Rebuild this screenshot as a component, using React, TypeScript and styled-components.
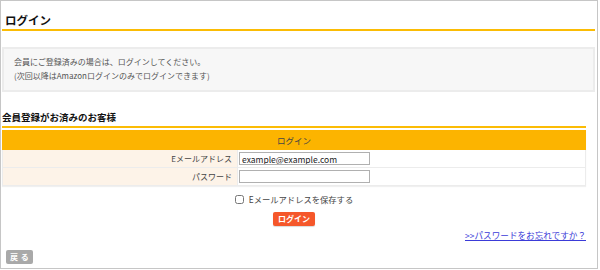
import React from 'react'
import styled, { createGlobalStyle } from 'styled-components'

const GlobalStyle = createGlobalStyle`
  body {
    margin: 0;
    background: #fff;
    font-family: "Noto Sans CJK JP", "Liberation Sans", sans-serif;
    color: #444;
  }
`

const Frame = styled.div`
  width: 598px;
  height: 269px;
  box-sizing: border-box;
  border: 1px solid #c6c6c6;
  padding: 0 2px 0 1px;
  display: flex;
  flex-direction: column;
`

const PageTitle = styled.h1`
  margin: 0;
  padding: 10px 0 0 3px;
  font-size: 11.5px;
  line-height: 18px;
  font-weight: bold;
  color: #111;
  border-bottom: 2px solid #fbbc05;
`

const InfoBox = styled.div`
  margin-top: 16px;
  border: 2px solid #ececec;
  background: #f7f7f7;
  padding: 6px 10px 7px;
  font-size: 8px;
  line-height: 14px;
  color: #555;
`

const Section = styled.div`
  margin-right: 9px;
  margin-top: 18px;
  display: flex;
  flex-direction: column;
`

const SectionTitle = styled.h2`
  margin: 0;
  font-size: 9.5px;
  font-weight: bold;
  line-height: 14px;
  padding-bottom: 2px;
  color: #111;
  border-bottom: 2px solid #fbbc05;
`

const LoginTable = styled.table`
  margin-top: 2px;
  width: 100%;
  border-collapse: collapse;
  font-size: 8px;
  box-shadow: 0 1px 1px rgba(0, 0, 0, 0.06);
`

const HeadCell = styled.th`
  background: #fcb400;
  height: 18px;
  padding: 0;
  font-weight: normal;
  font-size: 8.5px;
  color: #444;
  border: 1px solid #fcb400;
`

const LabelCell = styled.td`
  width: 229px;
  background: #fdf3e8;
  text-align: right;
  padding: 0 5px 0 0;
  height: 17px;
  color: #444;
  border: 1px solid #ececec;
`

const FieldCell = styled.td`
  padding: 0 0 0 1px;
  border: 1px solid #ececec;
  background: #fff;
`

const TextInput = styled.input`
  display: block;
  box-sizing: border-box;
  width: 131px;
  height: 13px;
  border: 1px solid #b0b0b0;
  padding: 0 2px;
  font-family: "Noto Sans CJK JP", sans-serif;
  font-size: 8.5px;
  color: #222;
  outline: none;
`

const SaveRow = styled.label`
  margin-top: 7px;
  display: flex;
  align-items: center;
  justify-content: center;
  gap: 5px;
  font-size: 8.3px;
  line-height: 12px;
  color: #444;
`

const Check = styled.input`
  width: 9px;
  height: 9px;
  margin: 0;
`

const SubmitRow = styled.div`
  margin-top: 7px;
  display: flex;
  justify-content: center;
`

const SubmitButton = styled.button`
  background: #f5572a;
  color: #fff;
  border: none;
  border-radius: 2px;
  height: 14px;
  padding: 0 5px;
  font-family: "Noto Sans CJK JP", sans-serif;
  font-size: 8px;
  font-weight: bold;
  line-height: 14px;
  box-shadow: 0 1px 1px rgba(0, 0, 0, 0.15);
`

const ForgotRow = styled.div`
  margin-top: 3px;
  text-align: right;
  font-size: 8.6px;
  line-height: 12px;
`

const ForgotLink = styled.a`
  color: #3b3bd8;
  text-decoration: underline;
`

const BackButton = styled.button`
  margin: auto 0 4px 4px;
  align-self: flex-start;
  background: #a9a9a9;
  color: #fff;
  border: none;
  border-radius: 2px;
  height: 14px;
  padding: 0 4px;
  font-family: "Noto Sans CJK JP", sans-serif;
  font-size: 8px;
  font-weight: bold;
  line-height: 14px;
  letter-spacing: 0.5px;
`

const App = () => {
  return (
    <Frame>
      <GlobalStyle />
      <PageTitle>ログイン</PageTitle>
      <InfoBox>
        会員にご登録済みの場合は、ログインしてください。
        <br />
        (次回以降はAmazonログインのみでログインできます)
      </InfoBox>
      <Section>
        <SectionTitle>会員登録がお済みのお客様</SectionTitle>
        <LoginTable>
          <thead>
            <tr>
              <HeadCell colSpan={2}>ログイン</HeadCell>
            </tr>
          </thead>
          <tbody>
            <tr>
              <LabelCell>Eメールアドレス</LabelCell>
              <FieldCell>
                <TextInput defaultValue="example@example.com" />
              </FieldCell>
            </tr>
            <tr>
              <LabelCell>パスワード</LabelCell>
              <FieldCell>
                <TextInput type="password" />
              </FieldCell>
            </tr>
          </tbody>
        </LoginTable>
        <SaveRow>
          <Check type="checkbox" />
          Eメールアドレスを保存する
        </SaveRow>
        <SubmitRow>
          <SubmitButton>ログイン</SubmitButton>
        </SubmitRow>
        <ForgotRow>
          <ForgotLink href="#">&gt;&gt;パスワードをお忘れですか？</ForgotLink>
        </ForgotRow>
      </Section>
      <BackButton>戻 る</BackButton>
    </Frame>
  )
}

export default App
